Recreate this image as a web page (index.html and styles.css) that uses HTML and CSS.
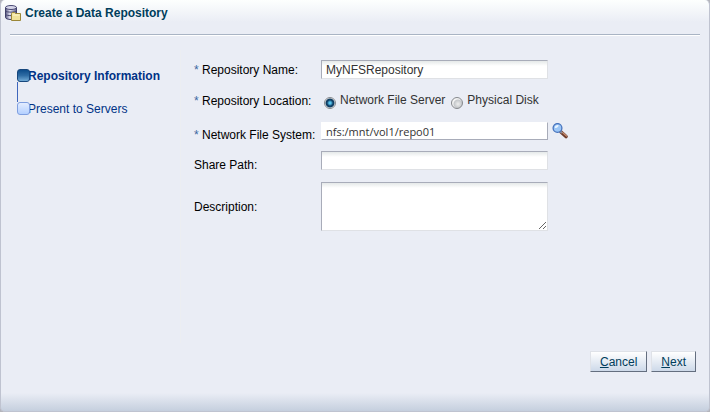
FILE: index.html
```html
<!DOCTYPE html>
<html lang="en">
<head>
    <meta charset="UTF-8">
    <meta name="viewport" content="width=device-width, initial-scale=1.0">
    <title>Create a Data Repository</title>
    <link rel="stylesheet" href="styles.css">
</head>
<body>
    <form class="dialog">
        <header class="dialog-header">
            <svg class="header-icon" width="16" height="17" viewBox="0 0 16 17" aria-hidden="true">
                <defs>
                    <linearGradient id="disk" x1="0" x2="1" y1="0" y2="0">
                        <stop offset="0" stop-color="#55557f"/>
                        <stop offset="0.4" stop-color="#e4e4f4"/>
                        <stop offset="1" stop-color="#62628c"/>
                    </linearGradient>
                </defs>
                <path d="M0.5 2.5v10c0 1.2 2.5 2 5.5 2s5.5-0.8 5.5-2v-10z" fill="url(#disk)" stroke="#3f3f68"/>
                <path d="M0.5 6c1 1.5 10 1.5 11 0M0.5 9.5c1 1.5 10 1.5 11 0" fill="none" stroke="#48486f"/>
                <ellipse cx="6" cy="2.5" rx="5.5" ry="2" fill="#d5d5e8" stroke="#4b4b75"/>
                <path d="M6.5 8.5l1-1h2l1 1h5v7h-9z" fill="#f0e29a" stroke="#9b8738"/>
                <path d="M7.5 10h7" stroke="#fff8cd"/>
            </svg>
            <h1>Create a Data Repository</h1>
        </header>

        <div class="dialog-body">
            <!-- Wizard steps -->
            <ol class="steps">
                <li class="step current" aria-current="step"><span class="step-box"></span>Repository Information</li>
                <li class="step"><span class="step-box"></span><a href="#servers">Present to Servers</a></li>
            </ol>

            <div class="fields">
                <label for="repo-name"><span class="required">*</span> Repository Name:</label>
                <input type="text" id="repo-name" class="field" value="MyNFSRepository">

                <span class="label" id="location-label"><span class="required">*</span> Repository Location:</span>
                <div class="radios" role="radiogroup" aria-labelledby="location-label">
                    <input type="radio" name="location" id="nfs" checked>
                    <label for="nfs">Network File Server</label>
                    <input type="radio" name="location" id="disk-location">
                    <label for="disk-location">Physical Disk</label>
                </div>

                <label for="file-system" class="low"><span class="required">*</span> Network File System:</label>
                <div class="lookup">
                    <input type="text" id="file-system" class="field lookup-field" value="nfs:/mnt/vol1/repo01">
                    <button type="button" class="search" aria-label="Search">
                        <svg width="17" height="17" viewBox="0 0 17 17">
                            <path d="M9 9l5 4.5" stroke="#6e3c2b" stroke-width="3.6" stroke-linecap="round"/>
                            <path d="M10.5 9.5l4 3.500" stroke="#c58c70" stroke-width="1.2" stroke-linecap="round"/>
                            <path d="M8 8l2 2" stroke="#8b8e9c" stroke-width="2"/>
                            <circle cx="5.5" cy="5" r="4.4" fill="#9cc6f6" stroke="#4673bd" stroke-width="1.3"/>
                            <path d="M2.8 5a2.8 2.8 0 0 1 4-2.600c-1 1.800-2 2.600-4 2.600z" fill="#e9f5ff"/>
                        </svg>
                    </button>
                </div>

                <label for="share-path" class="low">Share Path:</label>
                <input type="text" id="share-path" class="field">

                <label for="description">Description:</label>
                <textarea id="description" class="field"></textarea>
            </div>
        </div>

        <footer class="dialog-footer">
            <button type="button" class="btn"><u>C</u>ancel</button>
            <button type="button" class="btn"><u>N</u>ext</button>
        </footer>
    </form>
</body>
</html>
```
FILE: styles.css
```css
* {
    box-sizing: border-box;
}

body {
    margin: 0;
    background: #b4b5bc;
    font-family: "Liberation Sans", Arial, sans-serif;
    font-size: 12px;
    line-height: 16px;
    color: #000;
}

input,
textarea,
button {
    font: inherit;
}

.dialog {
    display: flex;
    flex-direction: column;
    min-height: 100vh;
    border: 1px solid #bfc3d0;
    border-top: 0;
    border-radius: 5px;
    background:
        linear-gradient(#fdfffe, #eaedf5) top / 100% 22px no-repeat,
        linear-gradient(#eaedf5, #c5cfde) bottom / 100% 18px no-repeat,
        #eaedf5;
}

/* Title bar */
.dialog-header {
    display: flex;
    gap: 4px;
    height: 35px;
    margin: 0 9px;
    padding-top: 5px;
    border-bottom: 1px solid #a9b4c4;
    box-shadow: 0 1px #fff;
}

.header-icon {
    margin-left: -5px;
}

h1 {
    margin: 0;
    font-size: 12px;
    color: #003d5b;
}

.dialog-body {
    display: flex;
    flex: 1;
}

/* Wizard steps */
.steps {
    flex: 0 0 180px;
    margin: 15px 0 8px;
    padding: 18px 0 0 16px;
    list-style: none;
    border-right: 1px solid #eceef2;
    color: #003286;
}

.step {
    display: flex;
    align-items: center;
    height: 16px;
    white-space: nowrap;
}

.step a {
    color: inherit;
    text-decoration: none;
}

.step.current {
    font-weight: bold;
}

.step + .step {
    margin-top: 17px;
}

.step-box {
    flex: none;
    position: relative;
    width: 13px;
    height: 13px;
    margin: 0 -2px 1px 0;
    border: 1px solid #7f9fe0;
    border-radius: 3px;
    background: linear-gradient(#e4edff, #b4d0ff);
}

.current .step-box {
    border-color: #17477d;
    background: linear-gradient(#0d4c8a, #2f6ca4 50%, #71aad5);
}

/* Line down to the next step */
.current .step-box::after {
    content: "";
    position: absolute;
    top: 12px;
    left: -1px;
    width: 1px;
    height: 20px;
    background: #3f66bc;
}

/* Form fields */
.fields {
    flex: 1;
    display: grid;
    grid-template-columns: 127px 1fr;
    grid-template-rows: 19px 21px 18px 19px 51px;
    row-gap: 11px;
    align-items: center;
    padding: 25px 12px 0 13px;
}

label,
.label {
    white-space: nowrap;
}

.low {
    padding-top: 8px;
}

.required {
    color: #3b66a0;
}

.field {
    display: block;
    width: 227px;
    height: 19px;
    margin: 0;
    padding: 0 4px;
    border: 1px solid #dfe1e5;
    border-top-color: #a8acb9;
    border-left-color: #a8acb9;
    border-radius: 0;
    outline: 0;
    background: linear-gradient(#e5e9e9, #fff 5px);
    color: #333;
}

textarea.field {
    height: 49px;
    resize: both;
}

.radios {
    display: flex;
    align-items: center;
    gap: 4px;
    color: #333;
}

.radios label {
    margin-right: 1px;
    padding-bottom: 2px;
}

.radios input {
    appearance: none;
    width: 12px;
    height: 12px;
    margin: 4px 0 0 3px;
    border: 1px solid #85888c;
    border-radius: 50%;
    background: radial-gradient(circle at 60% 60%, #eee, #c4c7ca 4px, #f4f4f4 5px);
}

.radios label + input {
    margin-left: 1px;
}

.radios input:checked {
    background: radial-gradient(circle, #58c5ee 1px, #103f67 3px, #123e61 4px, #f4f4f4 5px);
}

.lookup {
    display: flex;
    align-items: center;
    gap: 4px;
}

.lookup-field {
    height: 18px;
    border-color: #fff #a8acb9 #a8acb9 #fff;
    background: #fff;
    font-family: "Open Sans", sans-serif;
    font-size: 11px;
}

.search {
    height: 18px;
    padding: 0;
    border: 0;
    background: none;
    cursor: pointer;
}

.search svg {
    display: block;
}

/* Buttons */
.dialog-footer {
    display: flex;
    justify-content: flex-end;
    gap: 4px;
    padding: 0 13px 39px;
}

.btn {
    height: 21px;
    padding: 0 9px;
    border: 1px solid #dfe2e8;
    border-right-color: #646e7f;
    border-bottom-color: #646e7f;
    background: linear-gradient(#fff, #cdd9e9);
    color: #003d5b;
    cursor: pointer;
}

.btn:hover {
    background: #fff;
}
```
